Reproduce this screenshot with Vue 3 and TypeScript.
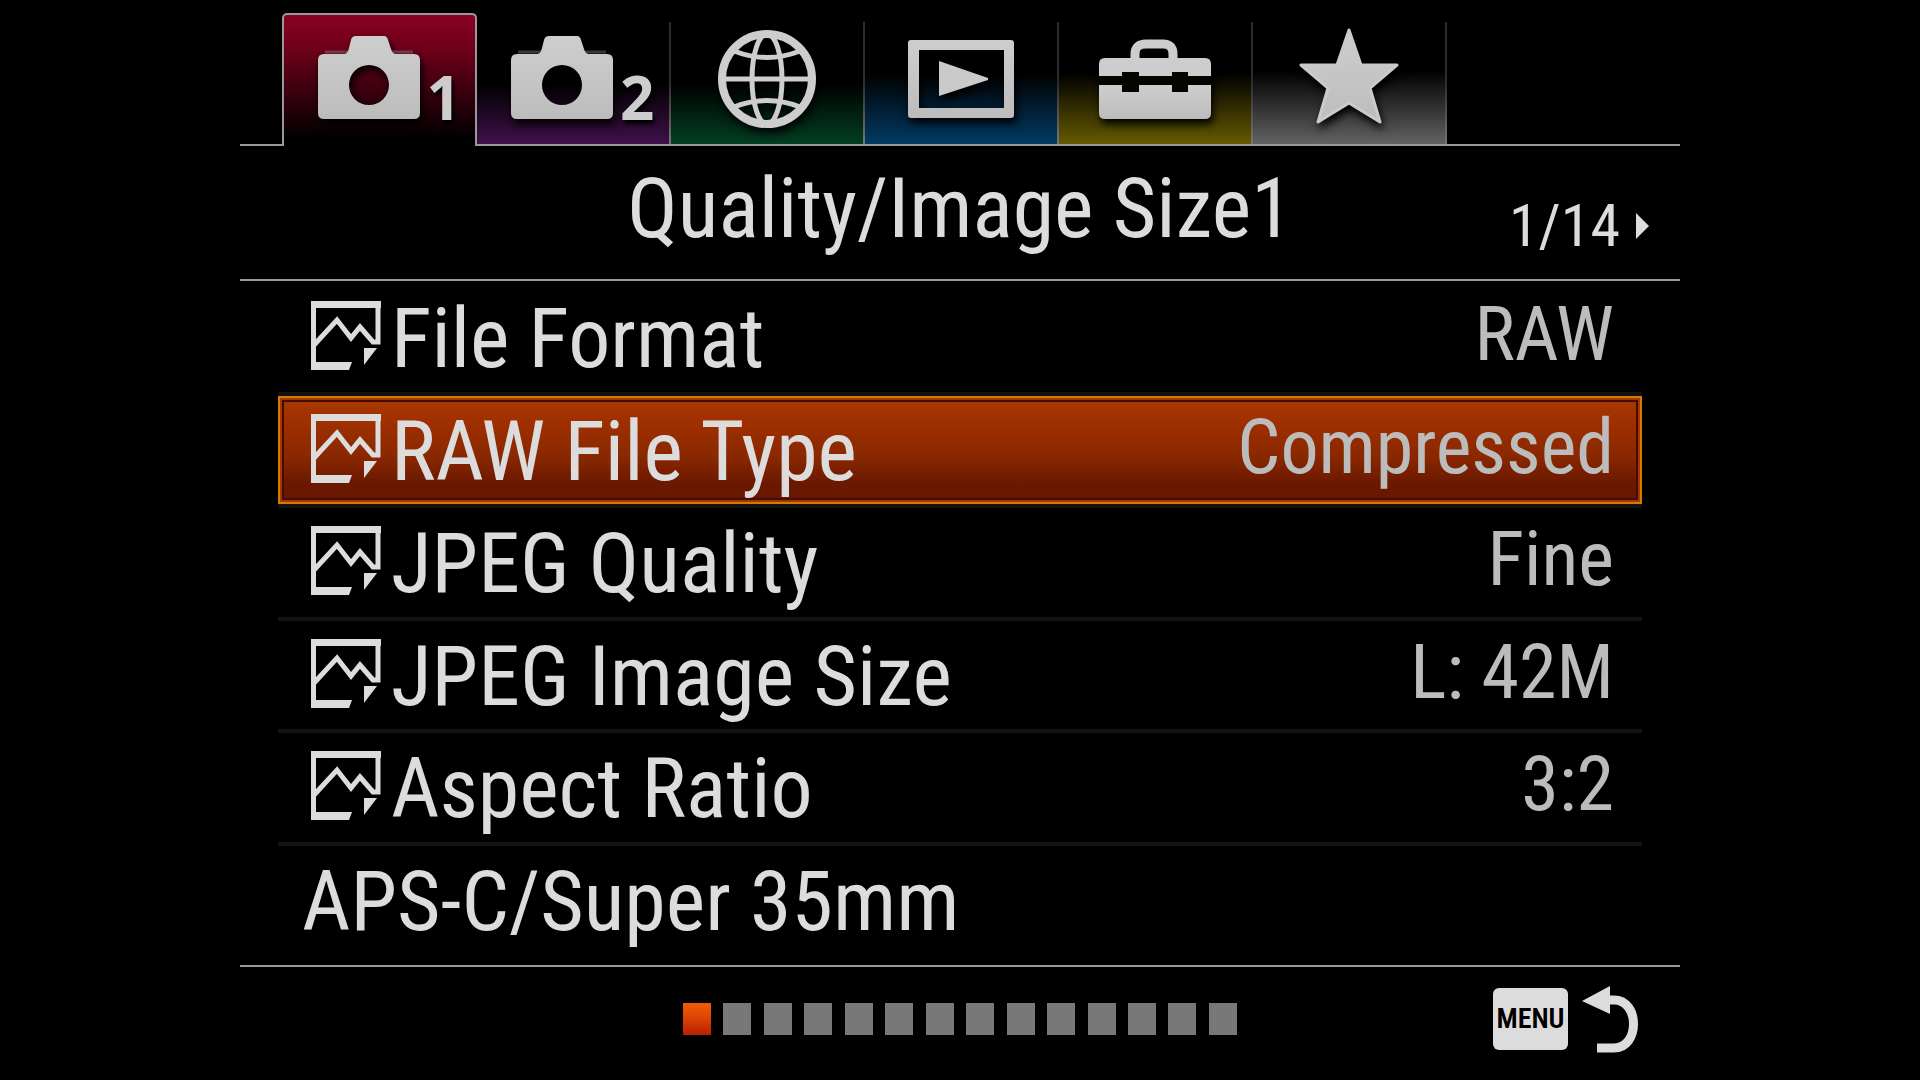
<script setup lang="ts">
import { ref } from 'vue'

type TabId = 'camera1' | 'camera2' | 'network' | 'playback' | 'setup' | 'mymenu'

interface Tab {
  id: TabId
  label: string
  digit?: string
}

interface Setting {
  name: string
  value: string
  still: boolean
}

const tabs: Tab[] = [
  { id: 'camera1', label: 'Camera settings 1', digit: '1' },
  { id: 'camera2', label: 'Camera settings 2', digit: '2' },
  { id: 'network', label: 'Network' },
  { id: 'playback', label: 'Playback' },
  { id: 'setup', label: 'Setup' },
  { id: 'mymenu', label: 'My menu' },
]

const settings: Setting[] = [
  { name: 'File Format', value: 'RAW', still: true },
  { name: 'RAW File Type', value: 'Compressed', still: true },
  { name: 'JPEG Quality', value: 'Fine', still: true },
  { name: 'JPEG Image Size', value: 'L: 42M', still: true },
  { name: 'Aspect Ratio', value: '3:2', still: true },
  { name: 'APS-C/Super 35mm', value: '', still: false },
]

const pageCount = 14
const page = ref(1)
const activeTab = ref<TabId>('camera1')
const selected = ref(1)

function nextPage(): void {
  page.value = (page.value % pageCount) + 1
}
</script>

<template>
  <main class="menu">
    <nav class="tabs" role="tablist" aria-label="Menu groups">
      <button
        v-for="tab in tabs"
        :key="tab.id"
        type="button"
        role="tab"
        class="tab"
        :class="[tab.id, { active: tab.id === activeTab }]"
        :aria-label="tab.label"
        :aria-selected="tab.id === activeTab"
        @click="activeTab = tab.id"
      >
        <svg v-if="tab.digit" class="glyph" width="104" height="112" viewBox="0 0 104 112" aria-hidden="true">
          <path d="M8 30H96" stroke="#8c8c8c" stroke-opacity=".4" stroke-width="3" />
          <path
            fill="url(#metal)"
            fill-rule="evenodd"
            d="M7 32H28Q31 31 32 26L34 18Q35 14 39 14H67Q70 14 71 18L74 27Q75 31 78 32H97Q103 32 103 38V91Q103 97 97 97H7Q1 97 1 91V38Q1 32 7 32ZM52 43A20 20 0 1 0 52 83A20 20 0 1 0 52 43Z"
          />
        </svg>
        <span v-if="tab.digit" class="digit">{{ tab.digit }}</span>

        <svg v-if="tab.id === 'network'" class="glyph" width="100" height="112" viewBox="0 0 100 112" aria-hidden="true">
          <g fill="none" stroke="#cdcdcd" stroke-width="5">
            <circle cx="50" cy="57" r="45" stroke-width="8" />
            <ellipse cx="50" cy="57" rx="15" ry="45" />
            <path d="M5 57H95M17 29Q50 42 83 29M17 85Q50 72 83 85" />
          </g>
        </svg>

        <svg v-if="tab.id === 'playback'" class="glyph" width="106" height="112" viewBox="0 0 106 112" aria-hidden="true">
          <path
            fill="url(#metal)"
            fill-rule="evenodd"
            d="M3 18H103Q106 18 106 21V93Q106 96 103 96H3Q0 96 0 93V21Q0 18 3 18ZM11 28V86H96V28Z"
          />
          <path fill="#cacaca" d="M31 39L80 56V58L31 74Z" />
        </svg>

        <svg v-if="tab.id === 'setup'" class="glyph" width="112" height="112" viewBox="0 0 112 112" aria-hidden="true">
          <path fill="#050500" d="M0 50H112V70H0Z" />
          <path d="M36 38V32Q36 22 47 22H64Q74 22 74 32V38" fill="none" stroke="#cdcdcd" stroke-width="9" />
          <path fill="#cdcdcd" d="M0 54V42Q0 36 6 36H106Q112 36 112 42V54H89V50H73V54H40V50H23V54Z" />
          <path fill="url(#metal)" d="M0 63H23V70H40V63H73V70H89V63H112V91Q112 97 106 97H6Q0 97 0 91Z" />
        </svg>

        <svg v-if="tab.id === 'mymenu'" class="glyph" width="100" height="112" viewBox="0 0 100 112" aria-hidden="true">
          <path
            fill="url(#metal)"
            stroke="#cacaca"
            stroke-width="3"
            stroke-linejoin="round"
            d="M50 8L62 43H98L71 66L81 100L50 81L19 100L29 66L2 43H38Z"
          />
        </svg>
      </button>
    </nav>

    <header class="heading">
      <h1 class="title">Quality/Image Size1</h1>
      <button type="button" class="pager" aria-label="Next page" @click="nextPage">
        <span>{{ page }}/{{ pageCount }}</span>
        <svg width="13" height="26" viewBox="0 0 13 26" aria-hidden="true">
          <path fill="#dcdcdc" d="M0 0L13 13L0 26Z" />
        </svg>
      </button>
    </header>

    <ul class="settings">
      <li v-for="(item, index) in settings" :key="item.name" class="item">
        <button
          type="button"
          class="row"
          :class="{ selected: index === selected }"
          @click="selected = index"
        >
          <svg v-if="item.still" class="still" width="72" height="72" viewBox="0 0 72 72" aria-hidden="true">
            <path
              fill="none"
              stroke="#dcdcdc"
              stroke-width="5"
              d="M3 45L26 20L40 38L49 27L62 42H67V4"
            />
            <path fill="#dcdcdc" d="M0 1H70V8H5V62H41L38 70H0Z" />
            <path fill="#dcdcdc" d="M53 48H66L53 65Z" />
          </svg>
          <span class="name">{{ item.name }}</span>
          <span class="value">{{ item.value }}</span>
        </button>
      </li>
    </ul>

    <footer class="footer">
      <ol class="pages" aria-label="Pages">
        <li v-for="n in pageCount" :key="n" class="page" :class="{ current: n === page }"></li>
      </ol>
      <button type="button" class="back" aria-label="Menu, go back">
        <span class="key">MENU</span>
        <svg width="56" height="70" viewBox="0 0 56 70" aria-hidden="true">
          <path fill="#dcdcdc" d="M0 17L28 2V30Z" />
          <path
            fill="none"
            stroke="#dcdcdc"
            stroke-width="9"
            d="M26 16H32C58 16 58 64 32 64H15"
          />
        </svg>
      </button>
    </footer>

    <svg class="defs" width="0" height="0" aria-hidden="true">
      <defs>
        <linearGradient id="metal" x1="0" y1="0" x2="0" y2="1">
          <stop offset="0" stop-color="#cecece" />
          <stop offset="1" stop-color="#bcbcbc" />
        </linearGradient>
      </defs>
    </svg>
  </main>
</template>

<style>
body {
  margin: 0;
  background: #000;
}
</style>

<style scoped>
.menu {
  box-sizing: border-box;
  display: flex;
  flex-direction: column;
  width: 75%;
  min-height: 100vh;
  margin: 0 auto;
  background: #000;
  color: #dcdcdc;
  font-family: "Roboto Condensed", Roboto, sans-serif;
}

button {
  margin: 0;
  padding: 0;
  border: 0;
  background: none;
  color: inherit;
  font: inherit;
  cursor: pointer;
}

.defs {
  position: absolute;
}

.tabs {
  display: flex;
  align-items: flex-end;
  height: 144px;
  padding-left: 42px;
  border-bottom: 2px solid #999;
}

.tab {
  box-sizing: border-box;
  display: flex;
  align-items: flex-end;
  justify-content: center;
  width: 194px;
  height: 122px;
  border-right: 2px solid;
  border-image: linear-gradient(#2c2c2c 50%, #777) 1;
}

.tab.active {
  width: 195px;
  height: 133px;
  margin-bottom: -2px;
  padding-bottom: 2px;
  border: 2px solid #999;
  border-bottom: 0;
  border-image: none;
  border-radius: 5px 5px 0 0;
  background: linear-gradient(#8a0022, #6c001a 28%, #30000c 65%, #000 95%);
}

.camera1:not(.active) { background: linear-gradient(#000 50%, #6c001a); }
.camera2:not(.active) { background: linear-gradient(#000 50%, #40104a); }
.network:not(.active) { background: linear-gradient(#000 50%, #033e22); }
.playback:not(.active) { background: linear-gradient(#000 42%, #023a64); }
.setup:not(.active) { background: linear-gradient(#000 42%, #665a00); }
.mymenu:not(.active) { background: linear-gradient(#000 40%, #626262); }

.glyph {
  display: block;
  flex: none;
  margin-bottom: 10px;
  overflow: visible;
  filter: drop-shadow(2px 5px 4px #000);
}

.digit {
  width: 34px;
  margin: 0 -18px 20px 6px;
  color: #cdcdcd;
  font: 700 60px/54px "Open Sans", "Noto Sans", sans-serif;
  text-shadow: 2px 4px 4px #000;
}

.heading {
  display: grid;
  grid-template-columns: 1fr auto 1fr;
  align-items: start;
  height: 133px;
  border-bottom: 2px solid #999;
}

.title {
  grid-column: 2;
  margin: 0;
  font-size: 84px;
  font-weight: 400;
  line-height: 126px;
}

.pager {
  display: flex;
  align-items: center;
  justify-self: end;
  gap: 16px;
  margin-right: 31px;
  font-size: 60px;
  line-height: 160px;
}

.settings {
  display: grid;
  flex: 1;
  grid-auto-rows: 1fr;
  margin: 0;
  padding: 2px 38px 7px;
  list-style: none;
}

.item {
  display: flex;
  border-bottom: 4px solid #121212;
}

.item:last-child {
  border-color: transparent;
}

.row {
  box-sizing: border-box;
  display: flex;
  flex: 1;
  align-items: center;
  padding: 4px 28px 0 24px;
  line-height: 84px;
  white-space: nowrap;
  text-align: left;
}

.row.selected {
  background: linear-gradient(#a83c00, #a03000 22%, #8a2800 55%, #6a1800 82%, #6a1600);
  box-shadow:
    inset 0 0 0 2px #dc7800,
    inset 0 0 0 4px #9a3c00,
    inset 0 0 0 6px #4a0a00;
}

.still {
  flex: none;
  margin: 0 8px 6px 9px;
}

.name {
  font-size: 84px;
}

.value {
  margin: 0 0 10px auto;
  color: #bcbcbc;
  font-size: 76px;
}

.footer {
  display: grid;
  grid-template-columns: 1fr auto 1fr;
  align-items: center;
  height: 113px;
  border-top: 2px solid #999;
}

.pages {
  display: flex;
  grid-column: 2;
  justify-content: space-between;
  width: 554px;
  margin: 0 0 10px;
  padding: 0;
  list-style: none;
}

.page {
  width: 28px;
  height: 32px;
  background: #787878;
}

.page.current {
  background: linear-gradient(#f05c04, #e04804 40%, #b82000);
}

.back {
  display: flex;
  align-items: center;
  justify-self: end;
  gap: 14px;
  margin: 0 42px 10px 0;
}

.key {
  width: 75px;
  border-radius: 6px;
  background: #dcdcdc;
  color: #000;
  font-size: 28px;
  font-weight: 600;
  line-height: 62px;
  text-align: center;
}
</style>
